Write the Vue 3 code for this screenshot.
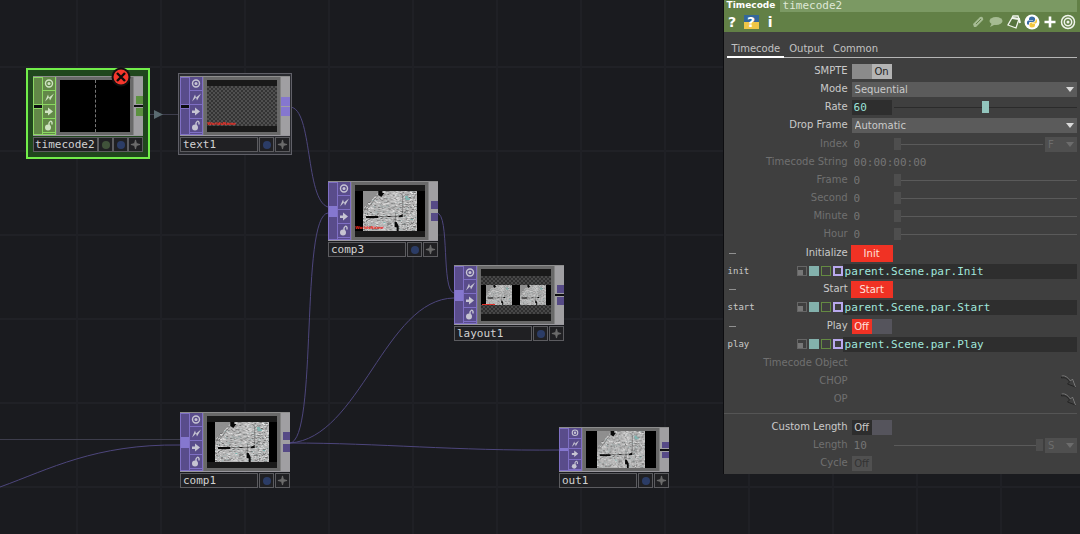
<script setup>
import { ref } from 'vue'

const nodes = [
  { name: 'timecode2', x: 33, y: 76, family: 'chop', view: 'trace', frame: 'selected', split: true, outs: 'gapped', dots: ['green', 'blue'], error: true },
  { name: 'text1', x: 180, y: 76, family: 'top', view: 'string', frame: 'outlined', split: true, outs: 'wide', dots: ['blue'] },
  { name: 'comp3', x: 328, y: 181, family: 'top', view: 'comp', caption: true, outs: 'joined', dots: ['blue'] },
  { name: 'layout1', x: 454, y: 265, family: 'top', view: 'layout', outs: 'gapped', dots: ['blue'] },
  { name: 'comp1', x: 180, y: 412, family: 'top', view: 'comp', outs: 'joined', dots: ['blue'] },
  { name: 'out1', x: 559, y: 427, family: 'top', view: 'out', outs: 'gapped', short: true, dots: ['blue'] },
]

// Seeded generator, so the map thumbnails always look alike.
let seed = 7
const rand = () => {
  seed = (seed * 16807) % 2147483647
  return seed / 2147483647
}
const shades = ['#e0e0e0', '#d4d4d4', '#f0f0f0', '#757575', '#8d8d8d', '#5c5c5c', '#a0b4b4', '#dadada']
const specks = Array.from({ length: 1100 }, () => ({
  x: Math.floor(rand() * 53),
  y: Math.floor(rand() * 40),
  w: 1 + Math.floor(rand() * 1.5),
  fill: shades[Math.floor(rand() * shades.length)],
})).filter((s) => s.x + s.y > 15 || s.fill === '#8d8d8d')

const wires = [
  'M0 439.500H180',
  'M0 487C50 469 95 444 180 445',
  'M143 114.500H180',
  'M290 107C313 108 305 200 328 207',
  'M290 443C318 440 300 216 328 213',
  'M290 443C360 438 385 299 454 298',
  'M437 213C450 214 441 291 454 293',
  'M290 443C380 443 455 451 559 450',
]

const rate = ref(60)
const tabs = ['Timecode', 'Output', 'Common']
const groups = [
  [
    { id: 'smpte', label: 'SMPTE', kind: 'toggle', on: true },
    { id: 'mode', label: 'Mode', kind: 'menu', value: 'Sequential' },
    { id: 'rate', label: 'Rate', kind: 'rate' },
    { id: 'drop', label: 'Drop Frame', kind: 'menu', value: 'Automatic' },
  ],
  [
    { id: 'index', label: 'Index', kind: 'number', value: '0', unit: 'F', at: 0, off: true },
    { id: 'string', label: 'Timecode String', kind: 'plain', value: '00:00:00:00', off: true },
    { id: 'frame', label: 'Frame', kind: 'number', value: '0', at: 0, off: true },
    { id: 'second', label: 'Second', kind: 'number', value: '0', at: 0, off: true },
    { id: 'minute', label: 'Minute', kind: 'number', value: '0', at: 0, off: true },
    { id: 'hour', label: 'Hour', kind: 'number', value: '0', at: 0, off: true },
  ],
  [
    { id: 'initialize', label: 'Initialize', kind: 'pulse', value: 'Init', open: true },
    { id: 'init', label: 'init', kind: 'expr', value: 'parent.Scene.par.Init' },
    { id: 'startpulse', label: 'Start', kind: 'pulse', value: 'Start', open: true },
    { id: 'start', label: 'start', kind: 'expr', value: 'parent.Scene.par.Start' },
  ],
  [
    { id: 'playtoggle', label: 'Play', kind: 'toggle', hot: true, open: true },
    { id: 'play', label: 'play', kind: 'expr', value: 'parent.Scene.par.Play' },
  ],
  [
    { id: 'object', label: 'Timecode Object', kind: 'plain', value: '', off: true },
    { id: 'chop', label: 'CHOP', kind: 'ref', off: true },
    { id: 'op', label: 'OP', kind: 'ref', off: true },
  ],
  [
    { id: 'custom', label: 'Custom Length', kind: 'toggle' },
    { id: 'length', label: 'Length', kind: 'number', value: '10', unit: 'S', at: 100, off: true },
    { id: 'cycle', label: 'Cycle', kind: 'small', off: true },
  ],
]
</script>

<template>
  <div class="app">
    <svg class="defs" aria-hidden="true">
      <defs>
        <symbol id="map" viewBox="0 0 53 40" preserveAspectRatio="none">
          <rect width="53" height="40" fill="#b4b4b4" />
          <path d="M0 0H16L9 9L0 20Z" fill="#8f8f8f" />
          <rect v-for="(s, i) in specks" :key="i" :x="s.x" :y="s.y" :width="s.w" height="1" :fill="s.fill" opacity=".65" />
          <path d="M15 0h4v2h2l-3 4l-3-2zM3 25h12v2H3zM24 25h3v1h-3zM35 25l4-2v3h-4zM31 31h2l2 4v5h-2v-4h-2z" fill="#080808" />
          <path d="M15 4L4 18M39 4V22M15 25.500H34M32 22V31" stroke="#333" fill="none" stroke-width=".7" opacity=".6" />
          <path d="M41 5h3v2h2v2h-4zM20 31h2v1h-2zM47 28h2v1h-2z" fill="#7fb5b2" />
        </symbol>
        <symbol id="jump" viewBox="0 0 16 14">
          <path d="M1 2C4 1 7 3 10 7L12 5L15 13L7 10L9 8C7 5 5 3 1 4Z" fill="#3f3f3f" stroke="#242424" />
          <path d="M1 2C4 1 7 3 10 7L12 5L15 13" fill="none" stroke="#808080" />
        </symbol>
      </defs>
    </svg>

    <main class="network">
      <svg class="wires" aria-hidden="true">
        <path v-for="(d, i) in wires" :key="d" :d="d" :class="{ plain: i === 0 || i === 2 }" />
        <path class="arrow" d="M154 110L163 114.500L154 119Z" />
      </svg>

      <section
        v-for="n in nodes"
        :key="n.name"
        class="node"
        :class="[n.family, n.frame, { short: n.short }]"
        :style="{ left: n.x + 'px', top: n.y + 'px' }"
      >
        <div class="body">
          <div class="inlet" :class="{ split: n.split }"><i></i></div>
          <div class="flags">
            <svg viewBox="0 0 12 12"><circle cx="6" cy="6" r="3.500" class="line" /><circle cx="6" cy="6" r="1.500" /></svg>
            <svg viewBox="0 0 12 12"><path d="M2 10L5 3L6 6L11 2L7 9L6 6Z" /></svg>
            <svg viewBox="0 0 12 12"><path d="M2 5H5V2L10 6L5 10V7.500H2Z" /></svg>
            <svg viewBox="0 0 12 12"><circle cx="5" cy="8" r="3" /><path d="M6 6V3.500Q8 0 9 3V5" class="line" /></svg>
          </div>
          <div class="viewer">
            <div class="screen" :class="n.view">
              <template v-if="n.view === 'layout'">
                <div class="pair">
                  <svg><use href="#map" /></svg>
                  <svg><use href="#map" /></svg>
                </div>
                <b class="redline"></b>
              </template>
              <svg v-else-if="n.view === 'comp' || n.view === 'out'"><use href="#map" /></svg>
              <div v-else-if="n.view === 'string'" class="checks"></div>
              <div v-else class="dash"></div>
              <span v-if="n.view === 'string' || n.caption" class="caption">WorldsName</span>
            </div>
          </div>
          <div class="outlet" :class="n.outs"><i></i><i></i></div>
        </div>
        <div class="foot">
          <span class="name">{{ n.name }}</span>
          <span v-for="d in n.dots" :key="d" class="cell"><i class="dot" :class="d"></i></span>
          <span class="cell"><svg viewBox="0 0 12 12"><path d="M6 1L7 5L11 6L7 7L6 11L5 7L1 6L5 5Z" fill="#6c6c6c" stroke="#6c6c6c" /></svg></span>
        </div>
        <svg v-if="n.error" class="error" viewBox="0 0 20 20">
          <circle cx="10" cy="10" r="9.500" fill="#111" /><circle cx="10" cy="10" r="7.500" fill="#f4372c" />
          <path d="M6 6L14 14M14 6L6 14" stroke="#0b0b0b" stroke-width="2.400" />
        </svg>
      </section>
    </main>

    <aside class="panel">
      <header>
        <div class="title">
          <label for="opname">Timecode</label>
          <input id="opname" value="timecode2" />
        </div>
        <div class="tools">
          <button class="glyph" aria-label="Help">?</button>
          <button class="glyph py" aria-label="Python help">?</button>
          <button class="glyph" aria-label="Info">i</button>
          <span class="fill"></span>
          <button aria-label="Edit"><svg viewBox="0 0 16 16"><path d="M4 13L3 10L10 3Q12 2 13 4T12 7L6 13Z" fill="#a5bb92" /><path d="M6 10L11 5" stroke="#64824a" /></svg></button>
          <button aria-label="Comment"><svg viewBox="0 0 16 16"><ellipse cx="8" cy="7" rx="6.500" ry="4" fill="#a5bb92" /><path d="M4 9L2 13L8 10Z" fill="#a5bb92" /></svg></button>
          <button aria-label="Tag"><svg viewBox="0 0 16 16"><path d="M6 4L13 5L10 14L2 11ZM6 4L7 2L12 2L13 5" fill="#56733e" stroke="#f0f4ec" stroke-width="1.300" /><path d="M6 4L13 5L14 9" stroke="#f0f4ec" stroke-width="2" fill="none" /></svg></button>
          <button aria-label="Python">
            <svg viewBox="0 0 16 16">
              <circle cx="8" cy="8" r="7.500" fill="#fff" />
              <path d="M8 2.500Q5 2.500 5 5V6H9V6.500H4Q2.500 7 3 10Q3.500 11 5 10.500V9Q5 8 6 8H9Q11 8 11 6V4Q10 2.500 8 2.500" fill="#3b6ea6" />
              <path d="M8 13.500Q11 13.500 11 11V10H8V9.500H12Q13.500 9 13 6Q12.500 5 11.500 5.500V7Q11 8.500 9 8.500H7Q5 9 5.500 12Q6 13.500 8 13.500" fill="#f3c73f" />
            </svg>
          </button>
          <button aria-label="Add"><svg viewBox="0 0 16 16"><path d="M8 2.500V13.500M2.500 8H13.500" stroke="#fff" stroke-width="2.600" /></svg></button>
          <button aria-label="Target"><svg viewBox="0 0 16 16"><g fill="none" stroke="#f0f4ec" stroke-width="1.500"><circle cx="8" cy="8" r="6.500" /><circle cx="8" cy="8" r="3.700" /></g><circle cx="8" cy="8" r="1.500" fill="#f0f4ec" /></svg></button>
        </div>
      </header>

      <nav class="tabs">
        <a v-for="(t, i) in tabs" :key="t" href="#" :class="{ current: i === 0 }">{{ t }}</a>
      </nav>

      <form class="params" @submit.prevent>
        <div v-for="(g, gi) in groups" :key="gi" class="group" :class="{ ruled: gi === groups.length - 1 }">
          <div v-for="p in g" :key="p.id" class="row" :class="[p.kind, { off: p.off }]">
            <i v-if="p.open" class="minus"></i>
            <label :for="p.id">{{ p.label }}</label>

            <button v-if="p.kind === 'toggle'" :id="p.id" type="button" role="switch" :aria-checked="!!p.on" class="switch" :class="{ on: p.on, hot: p.hot }">
              <span>{{ p.on ? 'On' : 'Off' }}</span>
            </button>

            <button v-else-if="p.kind === 'small'" :id="p.id" type="button" role="switch" aria-checked="false" class="half" disabled>Off</button>

            <div v-else-if="p.kind === 'menu'" class="pick">
              <select :id="p.id"><option>{{ p.value }}</option></select>
              <svg viewBox="0 0 8 5"><path d="M0 0H8L4 5Z" /></svg>
            </div>

            <template v-else-if="p.kind === 'rate'">
              <input :id="p.id" v-model="rate" class="num" />
              <input v-model="rate" type="range" min="0" max="120" aria-label="Rate slider" />
            </template>

            <template v-else-if="p.kind === 'number'">
              <input :id="p.id" class="num" :value="p.value" disabled />
              <input type="range" :value="p.at" disabled :aria-label="p.label + ' slider'" />
              <div v-if="p.unit" class="pick unit">
                <select :aria-label="p.label + ' unit'" disabled><option>{{ p.unit }}</option></select>
                <svg viewBox="0 0 8 5"><path d="M0 0H8L4 5Z" /></svg>
              </div>
            </template>

            <button v-else-if="p.kind === 'pulse'" :id="p.id" type="button" class="push">{{ p.value }}</button>

            <template v-else-if="p.kind === 'expr'">
              <span class="modes"><i class="m1"></i><i class="m2"></i><i class="m3"></i><i class="m4"></i></span>
              <input :id="p.id" class="code" :value="p.value" spellcheck="false" />
            </template>

            <template v-else>
              <input :id="p.id" class="long" :value="p.value" disabled />
              <svg v-if="p.kind === 'ref'" class="jump"><use href="#jump" /></svg>
            </template>
          </div>
        </div>
      </form>
    </aside>
  </div>
</template>

<style>
html { background: #1a1b1f; }
body { overflow: hidden; }
</style>

<style scoped>
* { box-sizing: border-box; }
.app {
  display: grid;
  grid-template-columns: 67% 33%;
  align-items: start;
  min-height: 100vh;
  font: 10px/18px 'DejaVu Sans', sans-serif;
  color: #cacaca;
  background-color: #1a1b1f;
  background-image: linear-gradient(90deg, #1f2025 2px, transparent 2px), linear-gradient(#202126 2px, transparent 2px);
  background-size: 84px 84px;
  background-position: 76px 66px;
}
.defs { position: absolute; width: 0; height: 0; }
.network { position: relative; align-self: stretch; }
.wires { position: absolute; inset: 0; width: 100%; height: 100%; fill: none; stroke: #4d467c; stroke-width: 1; }
.wires .plain { stroke: #3d3d4c; }
.wires .arrow { fill: #5a6b70; stroke: none; }
button, input, select { font: inherit; color: inherit; border: 0; padding: 0; margin: 0; background: none; border-radius: 0; min-width: 0; }

/* nodes */
.node { position: absolute; z-index: 0; width: 110px; --tint: #594c8b; --edge: #7f6fc4; --port: #8577cf; --dim: #564a86; }
.node.chop { --tint: #628848; --edge: #8cd863; --port: #669548; --dim: #5c9140; }
.node::before { content: ''; position: absolute; z-index: -1; }
.selected::before { inset: -8px -7px -7px; border: 2px solid #72ee4a; background: #20471d; }
.outlined::before { inset: -3px -2px; border: 1px solid #606068; background: #2a2b30; }
.body { display: flex; height: 60px; background: #696969; border-top: 1px solid #8d8d8d; border-bottom: 1px solid #99979d; }
.short .body { height: 45px; }
.inlet { width: 9px; background: var(--tint); border: 1px solid var(--edge); border-right: 0; display: flex; align-items: center; }
.inlet i { width: 8px; height: 11px; background: var(--port); }
.short .inlet i { height: 3px; }
.inlet.split i { height: 3px; background: #0d0d10; outline: 1px solid var(--edge); }
.flags { width: 14px; background: var(--tint); border: 1px solid var(--edge); border-top: 0; display: flex; flex-direction: column; }
.flags svg { width: 12px; height: 14px; fill: #c6c4d2; border-bottom: 1px solid var(--edge); }
.flags .line { fill: none; stroke: #c6c4d2; stroke-width: 1.4; }
.chop .flags svg { fill: #cfe3c2; }
.chop .flags .line { stroke: #cfe3c2; }
.short .flags svg { height: 11px; }
.viewer { flex: 1; padding: 3px; border-left: 1px solid #777; border-right: 1px solid #848484; display: flex; }
.screen { position: relative; flex: 1; background: #000; display: flex; align-items: center; justify-content: center; overflow: hidden; }
.screen > svg { width: 54px; height: 40px; flex: none; }
.comp { border-top: 6px solid #1a1a1a; border-bottom: 6px solid #1a1a1a; }
.out > svg { width: 48px; height: 37px; }
.checks {
  width: 100%; height: 40px;
  background: repeating-conic-gradient(#343434 0 25%, #505050 0 50%) 0 0 / 4px 4px;
}
.string { background: #191919; }
.dash { height: 100%; border-left: 1px dashed #777; }
.caption { position: absolute; left: 0; bottom: 5px; font: bold 4px/6px 'DejaVu Sans', sans-serif; color: #f02d22; }
.comp .caption { bottom: 0; }
.layout { background: #191919; }
.layout::before { content: ''; position: absolute; inset: 7px 0; background: repeating-conic-gradient(#2e2e2e 0 25%, #484848 0 50%) 0 0 / 4px 4px; }
.pair { position: relative; display: flex; justify-content: space-between; width: 100%; padding: 0 5px; background: #000; }
.pair svg { width: 26px; height: 20px; }
.redline { position: absolute; left: 1px; bottom: 16px; width: 13px; height: 1px; background: #e03028; }
.outlet { width: 9px; background: #a09fa2; display: flex; flex-direction: column; align-items: flex-end; justify-content: center; gap: 4px; }
.outlet i { width: 7px; height: 8px; background: var(--dim); }
.outlet.gapped { background: linear-gradient(#a09fa2 0 calc(50% - 1px), #0e0e10 0 calc(50% + 1px), #a09fa2 0); }
.short .outlet i { height: 6px; }
.outlet.wide { gap: 1px; }
.outlet.wide i { width: 9px; height: 9px; background: var(--port); }
.foot { display: flex; gap: 1px; height: 16px; padding: 1px 0 0; }
.foot span { border: 1px solid #5c5c60; background: #202023; height: 15px; }
.name { flex: 1; padding-left: 2px; font: 11px/14px 'DejaVu Sans Mono', monospace; color: #d2d2d2; }
.cell { width: 15px; display: grid; place-items: center; }
.chop .cell { margin-left: -1px; }
.chop .name { padding-left: 1px; }
.cell svg { width: 11px; height: 11px; }
.dot { width: 8px; height: 8px; border-radius: 50%; background: #2b3c66; }
.dot.green { background: #40523a; }
.error { position: absolute; left: 78px; top: -9px; width: 20px; height: 20px; }

/* parameter panel */
.panel { background: #3f3f3f; box-shadow: -1px 0 #0d0d10; padding-bottom: 2px; }
header { background: #628046; color: #fff; }
.title { display: flex; height: 12px; }
.title label { width: 56px; padding-left: 3px; font-weight: bold; font-size: 9px; line-height: 10px; }
.title input { flex: 1; margin-right: 3px; padding: 0 3px 2px; background: #7b9963; color: #dfe8d6; font: 11px/10px 'DejaVu Sans Mono', monospace; }
.tools { display: flex; align-items: center; height: 20px; padding: 0 4px; gap: 2px; }
.tools .fill { flex: 1; }
.tools button { width: 16px; height: 16px; line-height: 16px; }
.tools svg { display: block; width: 16px; height: 16px; }
.tools .glyph { width: 15px; height: 14px; margin-right: 2px; line-height: 14px; font-weight: bold; font-size: 14px; text-align: center; }
.tools .glyph:first-child { margin-left: -3px; }
.tools .py { background: linear-gradient(#33679b 50%, #efc648 50%); }
.tabs { display: flex; gap: 9px; margin: 8px 3px 4px; padding-left: 5px; border-bottom: 1px solid #b5b5b5; }
.tabs a { height: 17px; line-height: 17px; color: #c2c2c2; text-decoration: none; }
.tabs .current { margin: 0 -4px 0 -5px; padding: 0 4px 0 5px; box-shadow: 0 1px #fff, inset 0 -1px #fff; }
.params { display: grid; gap: 1px; padding-right: 3px; }
.ruled { border-top: 1px solid #555; margin-top: 4px; padding-top: 4px; }
.row { position: relative; display: flex; align-items: center; height: 18px; }
.row > label { width: 124px; margin-right: 4px; text-align: right; flex: none; }
.off { color: #707070; }
.minus { position: absolute; left: 5px; width: 7px; height: 1px; background: #909090; }
.switch { display: flex; width: 40px; height: 15px; line-height: 15px; background: #55545c; text-align: center; }
.switch span { width: 20px; background: #2d2d2d; height: 15px; }
.switch.hot span { background: #f03224; color: #ffe0dc; }
.switch.on { background: #8b8b8b; justify-content: flex-end; color: #1f1f1f; }
.switch.on span { background: #b4b4b4; }
.half { width: 20px; height: 15px; line-height: 15px; background: #505050; color: #333; }
.push { width: 42px; height: 17px; margin-left: -1px; background: #f03224; color: #ffe0dc; line-height: 17px; }
.pick { position: relative; flex: 1; height: 15px; background: #5b5b5b; }
.pick select { display: block; appearance: none; width: 100%; height: 15px; padding-left: 3px; line-height: 15px; color: #cacaca; opacity: 1; }
.pick svg { position: absolute; right: 3px; top: 5px; width: 8px; height: 5px; fill: #dadada; pointer-events: none; }
.pick.unit { flex: 0 0 32px; margin-left: 2px; background: #4f4f4f; }
.unit select { color: #6c6c6c; }
.pick.unit svg { fill: #6c6c6c; }
.num { width: 40px; height: 15px; padding-left: 2px; margin-right: 2px; font: 11px/15px 'DejaVu Sans Mono', monospace; color: #757575; flex: none; }
.rate .num { background: #2e2e2e; color: #9ae3da; }
.long { flex: 1; height: 15px; padding-left: 2px; font: 11px/15px 'DejaVu Sans Mono', monospace; color: #757575; }
.jump { width: 17px; height: 14px; }
input[type='range'] { flex: 1; appearance: none; height: 14px; background: linear-gradient(#2b2b2b, #2b2b2b) center / 100% 1px no-repeat; }
input[type='range']::-webkit-slider-thumb { appearance: none; width: 7px; height: 12px; background: #92c5bd; }
input[type='range']:disabled { background-image: linear-gradient(#5a5a5a, #5a5a5a); }
input[type='range']:disabled::-webkit-slider-thumb { background: #4e4e4e; }
.expr > label { width: 73px; margin: 0; padding-left: 4px; text-align: left; font: 9px/18px 'DejaVu Sans Mono', monospace; }
.modes { display: flex; gap: 2px; width: 46px; flex: none; }
.modes i { width: 10px; height: 10px; border: 1px solid #666; }
.modes .m1 { background: linear-gradient(#777, #777) left bottom / 5px 5px no-repeat; }
.modes .m2 { background: #83b1ac; border-color: #83b1ac; }
.modes .m3 { border-color: #648a42; }
.modes .m4 { border: 2px solid #b9a9ee; }
.code { flex: 1; height: 15px; padding-left: 2px; background: #2e2e2e; color: #a0e6dc; font: 11px/15px 'DejaVu Sans Mono', monospace; }
</style>
